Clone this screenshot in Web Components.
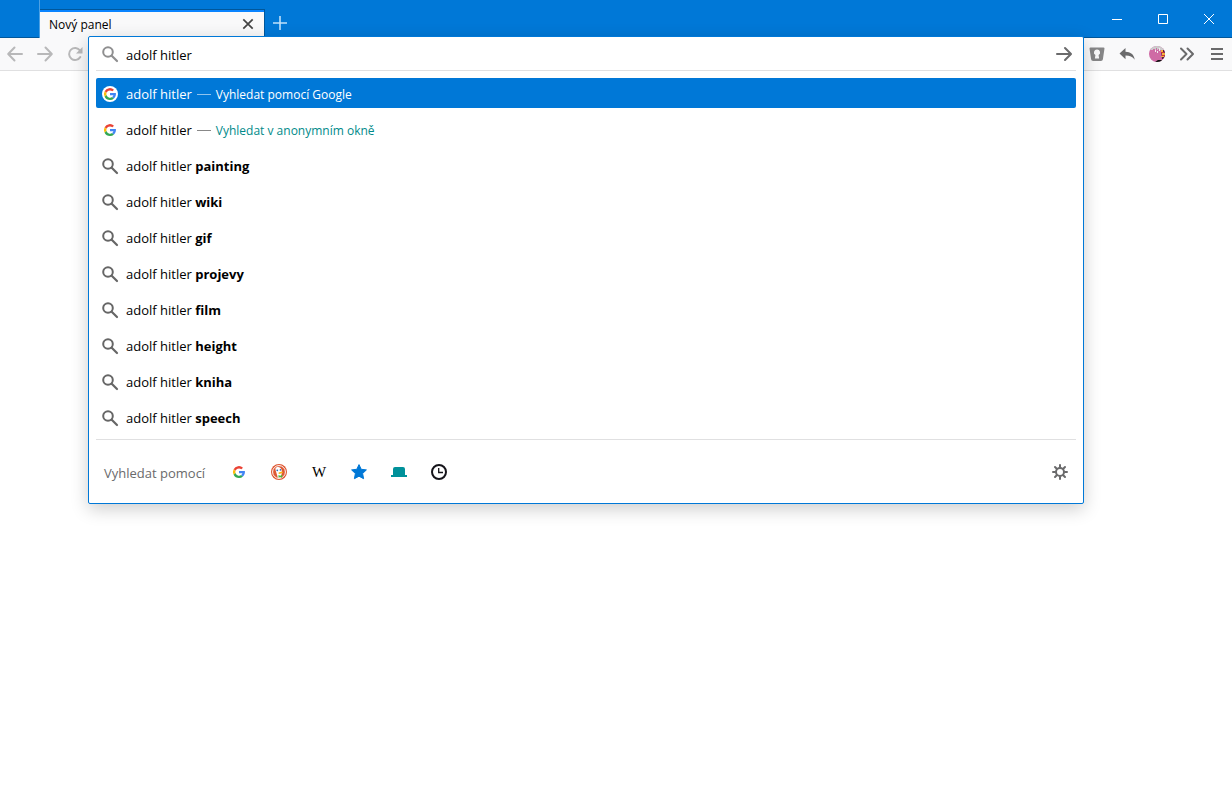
<!DOCTYPE html>
<html lang="cs">
<head>
<meta charset="utf-8">
<title>Nový panel</title>
<style>
html, body { height: 100%; }
body { margin: 0; background: #fff; font-family: "Open Sans", "Noto Sans", sans-serif; font-size: 13px; color: #000; overflow: hidden; }
</style>
</head>
<body>
<browser-window></browser-window>
<script>
const G = `<path fill="#ea4335" d="M8 4.400c.9 0 1.700.3 2.400.9l1.600-1.600A6 6 0 0 0 2.600 5.300l2 1.500A3.700 3.700 0 0 1 8 4.400z"/><path fill="#fbbc05" d="M4.500 6.900l-1.900-1.600a6 6 0 0 0 0 5.400l1.900-1.600a3.700 3.700 0 0 1 0-2.200z"/><path fill="#34a853" d="M8 14a5.900 5.900 0 0 0 4-1.500l-1.900-1.400a3.700 3.700 0 0 1-5.600-2l-1.900 1.600A6 6 0 0 0 8 14z"/><path fill="#4285f4" d="M13.900 7H8v2.200h3.400A2.800 2.800 0 0 1 10.100 11.100l1.900 1.400c1.500-1.400 2.200-3.400 1.900-5.500z"/>`;
const ICONS = {
  back: `<g fill="none" stroke="currentColor" stroke-width="2" stroke-linecap="round" stroke-linejoin="round"><path d="M15 8H1.500M7.500 1.500 1.200 8l6.300 6.500"/></g>`,
  forward: `<g fill="none" stroke="currentColor" stroke-width="2" stroke-linecap="round" stroke-linejoin="round"><path d="M1 8h13.500M8.500 1.500 14.800 8l-6.300 6.500"/></g>`,
  reload: `<path fill="none" stroke="currentColor" stroke-width="2" stroke-linecap="round" d="M13 4.500A6 6 0 1 0 13.300 11"/><path fill="currentColor" d="M15.500 1v6.500H9z"/>`,
  search: `<circle cx="6" cy="6" r="4.800" fill="none" stroke="currentColor" stroke-width="2"/><path d="M9.700 9.700 15 15" stroke="currentColor" stroke-width="2.200" stroke-linecap="round"/>`,
  go: `<path fill="none" stroke="currentColor" stroke-width="2" stroke-linecap="round" stroke-linejoin="round" d="M1 8h13.500M9 2l6 6-6 6"/>`,
  close: `<path stroke="currentColor" stroke-width="1.700" d="m3.300 3.300 9.400 9.400M12.700 3.300l-9.400 9.400"/>`,
  plus: `<path stroke="currentColor" stroke-width="1.600" d="M8 1v14M1 8h14"/>`,
  min: `<path stroke="currentColor" d="M3 8.500h10"/>`,
  max: `<path fill="none" stroke="currentColor" d="M3.500 3.500h9v9h-9z"/>`,
  exit: `<path stroke="currentColor" d="m3 3 10 10M13 3 3 13"/>`,
  key: `<path fill="#868687" fill-rule="evenodd" d="M1.500 1.500h13a1 1 0 0 1 1 1l-1.600 10.700a2 2 0 0 1-2 1.800H4.100a2 2 0 0 1-2-1.800L.5 2.500a1 1 0 0 1 1-1zM8 3.500a3 3 0 0 0-1.600 5.600L5.900 12.500h4.200l-.5-3.400A3 3 0 0 0 8 3.500z"/>`,
  reply: `<path fill="currentColor" d="M6.500 2v3.800c5 0 8.500 2.700 9.200 7.900-2-2.800-4.900-4.100-9.200-4.100v3.600L.5 7.500z"/>`,
  avatar: `<clipPath id="c"><circle cx="8" cy="8" r="8"/></clipPath><g clip-path="url(#c)"><path fill="#cf6ba5" d="M0 0h16v16H0z"/><path fill="#ccc" d="M2 0h14v4H2z"/><path fill="#cf6ba5" d="M4 3h2v2H4zM7 2h1v3H7zM9 3h2v3H9z"/><path fill="#eee" d="M6 4h1v2H6zM8 5h1v2H8zM10 2h1v3h-1z"/><path fill="#5a183f" d="M12 4h4v9h-3z"/><path fill="#f5b13d" d="M12 4h2v2h-2zM13 7h3v2h-3zM12 10h3v1h-3z"/><path fill="#d5362e" d="M12 6h3v1h-3zM13 9h3v1h-3z"/><path fill="#111" d="m6 16 3-2h4v2z"/></g>`,
  more: `<path fill="none" stroke="currentColor" stroke-width="2" stroke-linecap="round" stroke-linejoin="round" d="m2 2.500 5.500 5.500L2 13.500M8.500 2.500 14 8l-5.500 5.500"/>`,
  menu: `<path stroke="currentColor" stroke-width="2" d="M2 3h12M2 8h12M2 13h12"/>`,
  google: G,
  googledisc: `<circle cx="8" cy="8" r="8" fill="#fff"/>` + G,
  duck: `<circle cx="8" cy="8" r="8" fill="#de5833"/><circle cx="8" cy="8" r="6.400" fill="none" stroke="#fff"/><path fill="#fff" d="M4.500 4.200C5.500 2.800 8 2.600 9.500 4c1.300 1.200 1.500 3 1.200 5l-.7 4.600-3 .6C6 11 5.300 8 4.500 6z"/><circle cx="6.300" cy="6.300" r=".9" fill="#2d6fb7"/><circle cx="9.400" cy="5.900" r=".8" fill="#2d6fb7"/><path fill="#fdb515" d="M7.600 8.500c1.500-.8 3.400-1 4.600-.5-.5 1-2.500 1.900-4.500 2z"/><path fill="#4cba3c" d="m7.500 11 1.700.8 2-1v3l-2-.7-1.700.6z"/>`,
  wiki: `<text x="8" y="13" text-anchor="middle" font-family="Liberation Serif, serif" font-size="15" fill="#000">W</text>`,
  star: `<path fill="#0078d7" stroke="#0078d7" stroke-linejoin="round" d="m8 .6 2.200 4.700 5.200.6-3.800 3.600 1 5.200L8 12.200l-4.600 2.500 1-5.200L.6 5.900l5.200-.6z"/>`,
  tab: `<path fill="#00919a" d="M2 11V5a2 2 0 0 1 2-2h8a2 2 0 0 1 2 2v6h2v2H0v-2z"/>`,
  clock: `<circle cx="8" cy="8" r="7" fill="none" stroke="#15141a" stroke-width="2"/><path fill="none" stroke="#15141a" stroke-width="1.300" d="M7.700 4v4.500H12"/>`,
  gear: `<g stroke="currentColor" stroke-width="2" stroke-linecap="round"><circle cx="8" cy="8" r="4" fill="none"/><path d="M8 1v2M8 13v2M1 8h2M13 8h2M3 3l1.500 1.500M11.500 11.500 13 13M13 3l-1.500 1.500M4.500 11.500 3 13"/></g>`
};

const define = (name, html, setup) => customElements.define(name, class extends HTMLElement {
  constructor() {
    super();
    const t = document.createElement('template');
    t.innerHTML = html;
    this.attachShadow({ mode: 'open' }).append(t.content.cloneNode(true));
  }
  connectedCallback() { if (setup) setup(this, this.shadowRoot); }
});

define('ui-icon', `<style>:host{display:block;width:16px;height:16px;flex:none}svg{display:block;width:100%;height:100%;overflow:visible}</style><svg viewBox="0 0 16 16" aria-hidden="true"></svg>`,
  (el, root) => { root.querySelector('svg').innerHTML = ICONS[el.getAttribute('name')]; });

define('icon-button', `<style>
:host{display:block;flex:none;width:30px;height:32px;color:#6a6a6b}
button{all:unset;box-sizing:border-box;display:flex;align-items:center;justify-content:center;width:100%;height:100%}
</style><button><ui-icon></ui-icon></button>`, (el, root) => {
  const b = root.querySelector('button');
  b.setAttribute('aria-label', el.getAttribute('label'));
  b.disabled = el.hasAttribute('disabled');
  const icon = document.createElement('ui-icon');
  icon.setAttribute('name', el.getAttribute('icon'));
  b.replaceChildren(icon);
});

define('browser-tab', `<style>
:host{display:flex;align-items:center;box-sizing:border-box;width:225px;height:29px;border:1px solid #00579b;border-width:1px 1px 0 0;background:linear-gradient(#0a84ff 2px,#f9f9fa 2px);font-size:12px;padding-left:9px;margin-top:9px}
span{flex:1}
icon-button{width:32px;height:24px;color:#444}
</style><span><slot></slot></span><icon-button icon="close" label="Zavřít panel"></icon-button>`);

define('title-bar', `<style>
:host{display:flex;box-sizing:border-box;height:38px;background:linear-gradient(#0078d7 37px,#00579b 37px)}
.edge{box-sizing:border-box;width:40px;border-right:1px solid #4da0e3}
.add{height:46px;width:30px;color:#bfe0fa}
.controls{display:flex;margin-left:auto}
.controls icon-button{width:46px;height:38px;color:#fff}
</style><div class="edge"></div><browser-tab>Nový panel</browser-tab>
<icon-button class="add" icon="plus" label="Otevřít nový panel"></icon-button>
<div class="controls"><icon-button icon="min" label="Minimalizovat"></icon-button><icon-button icon="max" label="Maximalizovat"></icon-button><icon-button icon="exit" label="Zavřít"></icon-button></div>`);

define('suggestion-row', `<style>
:host{display:block}
a{display:flex;align-items:center;box-sizing:border-box;height:30px;padding:2px 6px 0;border-radius:2px;color:inherit;text-decoration:none;white-space:pre}
ui-icon{margin-right:8px;color:#666}
.action{display:flex;align-items:center;font-size:12px;color:#008a8a}
.action:before{content:"";width:14px;height:1px;margin:0 5px;background:#888}
:host(:not([action])) .action{display:none}
:host([selected]) a{background:#0078d7;color:#fff}
:host([selected]) .action{color:#fff}
:host([selected]) .action:before{background:#8fc3ee}
</style><a href="#"><ui-icon></ui-icon><span><slot></slot></span><span class="action"></span></a>`, (el, root) => {
  const icon = document.createElement('ui-icon');
  icon.setAttribute('name', el.getAttribute('icon') || 'search');
  root.querySelector('ui-icon').replaceWith(icon);
  root.querySelector('.action').textContent = el.getAttribute('action') || '';
});

define('search-engines', `<style>
:host{display:flex;align-items:center;height:63px;border-top:1px solid #e0e0e1;color:#6a6a6b}
span{padding:2px 14px 0 8px}
icon-button{width:40px}
.settings{width:32px;margin-left:auto}
</style><span>Vyhledat pomocí</span>
<icon-button icon="google" label="Google"></icon-button><icon-button icon="duck" label="DuckDuckGo"></icon-button><icon-button icon="wiki" label="Wikipedie"></icon-button><icon-button icon="star" label="Záložky"></icon-button><icon-button icon="tab" label="Panely"></icon-button><icon-button icon="clock" label="Historie"></icon-button>
<icon-button class="settings" icon="gear" label="Nastavení vyhledávání"></icon-button>`);

define('url-bar', `<style>
:host{display:block;position:relative;flex:1}
.panel{position:absolute;top:-2px;left:-2px;right:-2px;z-index:1;box-sizing:border-box;border:1px solid #0078d7;border-radius:2px;background:#fff;padding:0 7px;box-shadow:0 5px 18px rgba(0,0,0,.2)}
.field{display:flex;align-items:center;height:33px;padding-left:6px;border-bottom:1px solid #e0e0e1;color:#8f8f90}
input{all:unset;flex:1;min-width:0;height:30px;margin-left:8px;padding-top:2px;box-sizing:border-box;color:#000}
.go{width:24px}
.list{display:flex;flex-direction:column;gap:6px;padding:7px 0}
</style><div class="panel"><div class="field"><ui-icon name="search"></ui-icon><input type="text" aria-label="Adresa nebo vyhledávání" value="adolf hitler"><icon-button class="go" icon="go" label="Přejít"></icon-button></div>
<div class="list">
<suggestion-row selected icon="googledisc" action="Vyhledat pomocí Google">adolf hitler</suggestion-row>
<suggestion-row icon="google" action="Vyhledat v anonymním okně">adolf hitler</suggestion-row>
<suggestion-row>adolf hitler <b>painting</b></suggestion-row>
<suggestion-row>adolf hitler <b>wiki</b></suggestion-row>
<suggestion-row>adolf hitler <b>gif</b></suggestion-row>
<suggestion-row>adolf hitler <b>projevy</b></suggestion-row>
<suggestion-row>adolf hitler <b>film</b></suggestion-row>
<suggestion-row>adolf hitler <b>height</b></suggestion-row>
<suggestion-row>adolf hitler <b>kniha</b></suggestion-row>
<suggestion-row>adolf hitler <b>speech</b></suggestion-row>
</div><search-engines></search-engines></div>`);

define('nav-toolbar', `<style>
:host{display:flex;height:32px;background:#f9f9fa;border-bottom:1px solid #e0e0e1}
[disabled]{color:#b8b8b9}
</style><icon-button disabled icon="back" label="Zpět"></icon-button><icon-button disabled icon="forward" label="Vpřed"></icon-button><icon-button disabled icon="reload" label="Obnovit"></icon-button>
<url-bar></url-bar>
<icon-button icon="key" label="Hesla"></icon-button><icon-button icon="reply" label="Zpět na panel"></icon-button><icon-button icon="avatar" label="Účet"></icon-button><icon-button icon="more" label="Další nástroje"></icon-button><icon-button icon="menu" label="Nabídka"></icon-button>`);

define('browser-window', `<style>:host{display:block;min-height:100%}</style><title-bar></title-bar><nav-toolbar></nav-toolbar>`);
</script>
</body>
</html>
